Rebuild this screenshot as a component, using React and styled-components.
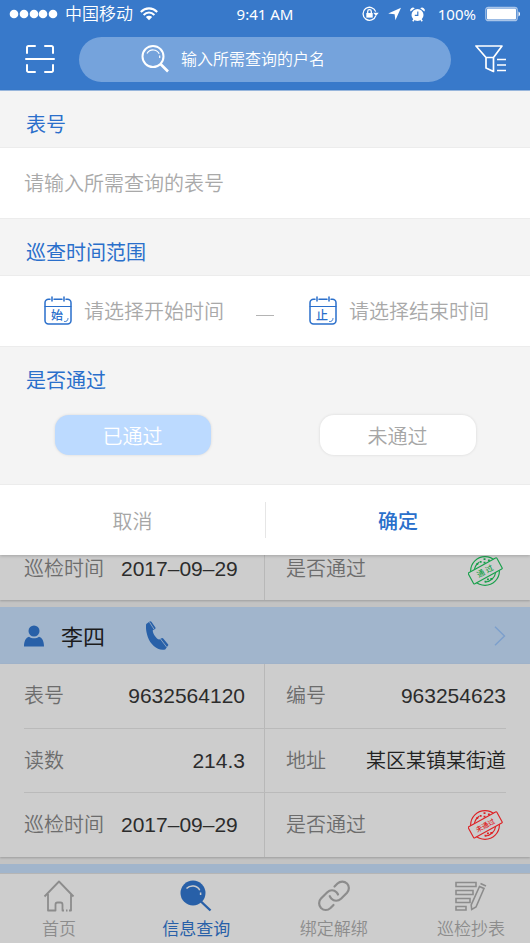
import React, { useState } from "react";
import styled, { createGlobalStyle } from "styled-components";

const records = [
  {
    name: "李四",
    meter: "9632564120",
    code: "963254623",
    reading: "214.3",
    address: "某区某镇某街道",
    date: "2017–09–29",
    passed: false,
  },
];

const tabs = [
  { label: "首页", Icon: HomeIcon },
  { label: "信息查询", Icon: QueryIcon, active: true },
  { label: "绑定解绑", Icon: LinkIcon },
  { label: "巡检抄表", Icon: MeterIcon },
];

function App() {
  const [passed, setPassed] = useState(true);

  return (
    <Page>
      <GlobalStyle />
      <Header>
        <StatusBar>
          <StatusGroup>
            <SignalIcon />
            <Carrier>中国移动</Carrier>
            <WifiIcon />
          </StatusGroup>
          <span>9:41 AM</span>
          <StatusGroup $end>
            <LockIcon />
            <LocationIcon />
            <AlarmIcon />
            <span>100%</span>
            <BatteryIcon />
          </StatusGroup>
        </StatusBar>
        <SearchRow>
          <IconButton aria-label="扫码">
            <ScanIcon />
          </IconButton>
          <SearchBox>
            <SearchIcon />
            <SearchInput aria-label="户名" placeholder="输入所需查询的户名" />
          </SearchBox>
          <IconButton aria-label="筛选">
            <FilterIcon />
          </IconButton>
        </SearchRow>
      </Header>

      <Panel>
        <Heading as="label" htmlFor="meter">
          表号
        </Heading>
        <Field>
          <MeterInput id="meter" placeholder="请输入所需查询的表号" />
        </Field>
        <Heading>巡查时间范围</Heading>
        <Field>
          <DateField>
            <CalendarIcon text="始" />
            <DateInput aria-label="开始时间" placeholder="请选择开始时间" />
          </DateField>
          <Dash />
          <DateField>
            <CalendarIcon text="止" />
            <DateInput aria-label="结束时间" placeholder="请选择结束时间" />
          </DateField>
        </Field>
        <Heading>是否通过</Heading>
        <Chips>
          <Chip $on={passed} aria-pressed={passed} onClick={() => setPassed(true)}>
            已通过
          </Chip>
          <Chip $on={!passed} aria-pressed={!passed} onClick={() => setPassed(false)}>
            未通过
          </Chip>
        </Chips>
        <Actions>
          <Action>取消</Action>
          <Action $primary>确定</Action>
        </Actions>
      </Panel>

      <List>
        <RecordBody>
          <StatusRow date="2017–09–29" passed cut />
        </RecordBody>
        {records.map((record) => (
          <React.Fragment key={record.name}>
            <RecordHead>
              <PersonIcon />
              <Name>{record.name}</Name>
              <PhoneIcon />
              <ChevronIcon />
            </RecordHead>
            <RecordBody>
              <Row>
                <Cell>
                  <dt>表号</dt>
                  <NumberValue>{record.meter}</NumberValue>
                </Cell>
                <Cell>
                  <dt>编号</dt>
                  <NumberValue>{record.code}</NumberValue>
                </Cell>
              </Row>
              <Row>
                <Cell>
                  <dt>读数</dt>
                  <NumberValue>{record.reading}</NumberValue>
                </Cell>
                <Cell>
                  <dt>地址</dt>
                  <Value>{record.address}</Value>
                </Cell>
              </Row>
              <StatusRow date={record.date} passed={record.passed} />
            </RecordBody>
          </React.Fragment>
        ))}
        <NextHead />
      </List>

      <TabBar>
        {tabs.map(({ label, Icon, active }) => (
          <Tab key={label} href="#" $active={active}>
            <Icon />
            {label}
          </Tab>
        ))}
      </TabBar>
    </Page>
  );
}

function StatusRow({ date, passed, cut }) {
  return (
    <Row $cut={cut}>
      <Cell $start>
        <dt>巡检时间</dt>
        <NumberValue>{date}</NumberValue>
      </Cell>
      <Cell>
        <dt>是否通过</dt>
        <dd>
          <StampIcon passed={passed} />
        </dd>
      </Cell>
    </Row>
  );
}

/* icons */

function SignalIcon() {
  return (
    <svg width="49" height="10" fill="#fff">
      {[5, 15, 25, 34, 44].map((x) => (
        <circle key={x} cx={x} cy="5" r="4.3" />
      ))}
    </svg>
  );
}

function WifiIcon() {
  return (
    <svg width="18" height="14" fill="none" stroke="#fff" strokeWidth="2.1">
      <path d="M.8 4.9C5.6.2 12.4.2 17.2 4.9M3.6 7.9c3.2-3 7.6-3 10.8 0" />
      <path d="M9 13.2 5.8 10.1c1.9-1.7 4.5-1.7 6.4 0z" fill="#fff" stroke="none" />
    </svg>
  );
}

function LockIcon() {
  return (
    <svg width="17" height="16" fill="none" stroke="#fff" strokeWidth="1.3">
      <path d="M13.8 9.6A6.5 6.5 0 1 1 13.7 5.6" />
      <path d="M11.3 6.7h5.4L14 10z" fill="#fff" stroke="none" />
      <rect x="4.3" y="7" width="6.4" height="4.6" fill="#fff" stroke="none" />
      <path d="M5.7 7V5.4a1.8 1.8 0 0 1 3.6 0V7" />
    </svg>
  );
}

function LocationIcon() {
  return (
    <svg width="13" height="14" fill="#fff">
      <path d="M13 .8 7.4 13.2 6.6 7.2.2 6.4z" />
    </svg>
  );
}

function AlarmIcon() {
  return (
    <svg width="15" height="15" fill="#fff">
      <path d="M.6 4.6A2.7 2.7 0 0 1 4.8 1.3zM14.4 4.6A2.7 2.7 0 0 0 10.2 1.3z" />
      <circle cx="7.5" cy="8" r="6" />
      <path d="M2.8 14.2 4 12.5M12.2 14.2 11 12.5" stroke="#fff" strokeWidth="1.5" />
      <path d="M7.8 4.5v3.8H4.8" fill="none" stroke="#3879ca" strokeWidth="1.2" />
    </svg>
  );
}

function BatteryIcon() {
  return (
    <svg width="36" height="16">
      <rect x=".8" y="1.3" width="31.4" height="13.4" rx="2.5" fill="none" stroke="#a9c5e9" strokeWidth="1.2" />
      <rect x="2" y="2.5" width="29" height="11" rx="1" fill="#fff" />
      <path d="M33.5 5.5c2 .8 2 4.2 0 5z" fill="#fff" />
    </svg>
  );
}

function ScanIcon() {
  return (
    <svg width="30" height="30" fill="none" stroke="#fff" strokeWidth="2" strokeLinecap="round">
      <path d="M2 9V3.5A1.5 1.5 0 0 1 3.5 2H10M20 2h6.5A1.5 1.5 0 0 1 28 3.5V9M28 21v5.5a1.5 1.5 0 0 1-1.5 1.5H20M10 28H3.5A1.5 1.5 0 0 1 2 26.5V21M1 15h28" />
    </svg>
  );
}

function SearchIcon() {
  return (
    <svg width="28" height="30" fill="none" stroke="#fff">
      <circle cx="12" cy="12.5" r="10.5" strokeWidth="2" />
      <path d="M6 9.5c3-5 10-4.500 12.200.3" strokeWidth="1.2" />
      <path d="M18.700 11.500v2.500" strokeWidth="1.2" />
      <path d="m19.500 20 7.500 7.500" strokeWidth="2.6" />
    </svg>
  );
}

function FilterIcon() {
  return (
    <svg width="31" height="30" fill="none" stroke="#fff" strokeWidth="1.7" strokeLinejoin="round">
      <path d="M1 2h26l-8.500 11.500v14l-7.500-3.500V13.500zM11 13.500h7.500" />
      <path d="M22 15.500h9M22 21h9M22 26.500h9" />
    </svg>
  );
}

function CalendarIcon({ text }) {
  return (
    <svg width="28" height="30" fill="none" stroke="#2a6fcb" strokeWidth="1.5" strokeLinecap="round">
      <path d="M6 3.3H4.5A3.5 3.5 0 0 0 1 6.800v17.7A3.5 3.5 0 0 0 4.5 28h19a3.500 3.500 0 0 0 3.500-3.500V6.800a3.500 3.500 0 0 0-3.500-3.500H22M10 3.300h8M8 1v4M20 1v4" />
      <path d="M1 10.500h26" strokeWidth="1" />
      <path d="M20.500 25.500c2.200.3 3.300-.8 3.500-3" strokeWidth=".9" />
      <text x="13" y="23.500" textAnchor="middle" fontSize="12" fontWeight="500" fill="#2a6fcb" stroke="none">
        {text}
      </text>
    </svg>
  );
}

function PersonIcon() {
  return (
    <svg width="20" height="22" fill="#2860a8">
      <circle cx="10" cy="6" r="5.5" />
      <path d="M0 21.500c0-5.500 2-9 5-9.700 3 2 7 2 10 0 3 .7 5 4.200 5 9.700z" />
    </svg>
  );
}

function PhoneIcon() {
  return (
    <svg width="23" height="31" fill="#2860a8">
      <path d="m.2 4 3.500-2.500q1-.8 1.700.2l4 5.800q.5.900-.4 1.500L6.800 10.300c-.3 3 3.500 8.500 6.500 9.300l2.200-1.300q1-.5 1.700.3l4.800 5.600q.6.8-.1 1.600l-2.700 3.600C12.500 31.500 4.500 25 1.800 17-.1 11.500-.3 7 .2 4z" />
      <path d="m3.500 2.200 4.500 7M14.500 19l6.300 8.300" stroke="#a1b5cc" strokeWidth=".8" />
    </svg>
  );
}

function ChevronIcon() {
  return (
    <Chevron width="12" height="20" fill="none" stroke="#7c9fcc" strokeWidth="1.4">
      <path d="m1 .8 9.500 9.200L1 19.200" />
    </Chevron>
  );
}

function StampIcon({ passed }) {
  const color = passed ? "#18a04b" : "#dd2326";
  return (
    <Stamp width="35" height="32" viewBox="0 0 36 32" fill="none" stroke={color} strokeWidth="1.2">
      <circle cx="17.5" cy="16" r="14.8" />
      <path d="M6.500 15a11.500 11.500 0 0 1 5-8M28.500 17a11.500 11.500 0 0 1-11 10.300" />
      <path d="M8.500 9h2M12 6.500h2M16 7.500h2M16 3.800h2M20.500 5h2M17 27h2M23 24h2M19.500 24.500h2" strokeWidth="1.8" />
      <g transform="rotate(-29 17.5 16)">
        <rect x="1" y="9.500" width="33.5" height="13" rx="1" fill="#cdcdcd" />
        <text x="17.500" y="19" textAnchor="middle" fontSize={passed ? 8 : 7} fontWeight="500" fill={color} stroke="none">
          {passed ? "通 过" : "未通过"}
        </text>
      </g>
    </Stamp>
  );
}

function HomeIcon() {
  return (
    <svg width="32" height="32" fill="none" stroke="currentColor" strokeWidth="1.8" strokeLinejoin="round">
      <path d="m1.500 16.500 14.500-15 14.500 15M5 14v16.500h7.500v-6a2 2 0 0 1 2-2h3a2 2 0 0 1 2 2v6h1.500M23 30.500h1.500M26 30.500h2V14" />
    </svg>
  );
}

function QueryIcon() {
  return (
    <svg width="32" height="32" fill="none" stroke="currentColor">
      <circle cx="13" cy="13" r="12.5" fill="currentColor" stroke="none" />
      <path d="m21 21.500 9.500 9" strokeWidth="2.4" />
      <path d="M6.500 8.500c4-4 11-3 13.200 1.700M20.600 12.500v2.500" stroke="#cdcdcd" strokeWidth="1.5" />
    </svg>
  );
}

function LinkIcon() {
  return (
    <svg width="32" height="32" fill="none" stroke="currentColor" strokeWidth="2.2" strokeLinecap="round">
      <path d="M16.500 6.500l3-3a7 7 0 0 1 9.500 0c2.500 2.500 2.500 6.500 0 9.200l-6 6c-2.800 2.700-7 2.700-9.500 0-.8-.8-1.300-1.700-1.700-2.500" />
      <path d="M20 14.500c-.3-.8-.8-1.600-1.500-2.300-2.500-2.600-6.500-2.600-9.200 0L3 18.500c-2.500 2.500-2.500 6.700 0 9.500 2.800 2.600 6.700 2.600 9.500 0l3-3" />
    </svg>
  );
}

function MeterIcon() {
  return (
    <svg width="32" height="32" fill="none" stroke="currentColor" strokeWidth="1.6">
      <path d="M1 2.500h20v4H1zM1 10.500h17v4H1zM1 18.500h14v4H1zM1 26.500h10v3.500H1z" />
      <path d="m24.500 6.500 4.500 2-8 18.500-4.300 2.500-.5-4.500zM25.500 3.500l5.500 2.500" />
    </svg>
  );
}

const GlobalStyle = createGlobalStyle`
  *, *::before, *::after {
    box-sizing: border-box;
  }

  body {
    margin: 0;
    background: #cdcdcd;
    font-family: "Noto Sans", "Noto Sans CJK SC", sans-serif;
    font-weight: 350;
  }

  button, input {
    border: 0;
    padding: 0;
    background: none;
    font: inherit;
    color: inherit;
    outline: none;
  }

  svg {
    display: block;
    flex: none;
    font-family: "Noto Sans CJK SC", sans-serif;
  }

  dl, dd {
    margin: 0;
  }
`;

const Page = styled.div`
  display: flex;
  flex-direction: column;
  height: 100vh;
`;

const Header = styled.header`
  flex: none;
  background: #3879ca;
  border-bottom: 1px solid #9dbce4;
  color: #fff;
`;

const StatusBar = styled.div`
  display: grid;
  grid-template-columns: 1fr auto 1fr;
  align-items: center;
  height: 28px;
  padding: 0 9px;
  font-family: "Noto Sans", "Noto Sans CJK SC", sans-serif;
  font-size: 15px;
  font-weight: 400;
  line-height: 20px;
`;

const StatusGroup = styled.div`
  display: flex;
  align-items: center;
  gap: ${(p) => (p.$end ? 9 : 7)}px;
  justify-content: ${(p) => (p.$end ? "flex-end" : "flex-start")};

  span {
    margin-left: ${(p) => (p.$end ? 4 : 0)}px;
  }
`;

const Carrier = styled.span`
  font-size: 17px;
  font-weight: 350;
`;

const SearchRow = styled.div`
  display: flex;
  align-items: center;
  gap: 24px;
  height: 62px;
  padding: 0 24px 0 25px;
`;

const IconButton = styled.button`
  flex: none;
  cursor: pointer;
`;

const SearchBox = styled.div`
  display: flex;
  flex: 1;
  align-items: center;
  gap: 12px;
  min-width: 0;
  height: 45px;
  padding: 0 16px 0 62px;
  border-radius: 23px;
  background: #75a3dc;
`;

const SearchInput = styled.input`
  flex: 1;
  min-width: 0;
  font-size: 16px;

  &::placeholder {
    color: #fff;
    opacity: 1;
  }
`;

const Panel = styled.section`
  flex: none;
  background: #f4f4f4;
  box-shadow: 0 1px 3px rgba(0, 0, 0, 0.2);
  font-size: 20px;
  z-index: 1;
`;

const Heading = styled.h2`
  display: block;
  margin: 0;
  padding: 21px 26px 9px;
  color: #2a6fcb;
  font-size: 20px;
  font-weight: 400;
  line-height: 26px;
`;

const Field = styled.div`
  display: flex;
  align-items: center;
  height: 72px;
  border: solid #ececec;
  border-width: 1px 0;
  background: #fff;

  input::placeholder {
    color: #a9a9a9;
    opacity: 1;
  }
`;

const MeterInput = styled.input`
  flex: 1;
  min-width: 0;
  padding: 0 24px;
`;

const DateField = styled.div`
  display: flex;
  flex: 1;
  align-items: center;
  gap: 12px;
  min-width: 0;
  padding-left: 44px;
`;

const DateInput = styled.input`
  flex: 1;
  min-width: 0;
`;

const Dash = styled.span`
  flex: none;
  width: 18px;
  height: 1px;
  margin: 8px -9px 0;
  background: #b4b4b4;
`;

const Chips = styled.div`
  display: grid;
  grid-template-columns: 1fr 1fr;
  justify-items: center;
  padding: 12px 0 29px;
`;

const Chip = styled.button`
  width: 156px;
  height: 40px;
  padding-top: 3px;
  border-radius: 14px;
  background: ${(p) => (p.$on ? "#bcdaff" : "#fff")};
  box-shadow: 0 0 3px rgba(0, 0, 0, 0.12);
  color: ${(p) => (p.$on ? "#fff" : "#a6a6a6")};
  line-height: 26px;
  cursor: pointer;
`;

const Actions = styled.div`
  display: grid;
  grid-template-columns: 1fr 1fr;
  padding: 17px 0;
  border-top: 1px solid #ececec;
  background: #fff;
`;

const Action = styled.button`
  height: 36px;
  color: ${(p) => (p.$primary ? "#2a6fcb" : "#a6a6a6")};
  font-weight: ${(p) => (p.$primary ? 500 : 350)};
  cursor: pointer;

  & + & {
    border-left: 1px solid #e6e6e6;
  }
`;

const List = styled.main`
  display: flex;
  flex: 1;
  flex-direction: column;
  min-height: 0;
  overflow-y: auto;
  scrollbar-width: none;
  background: #c3c3c3;
  font-size: 20px;
  line-height: 28px;
`;

const RecordHead = styled.div`
  display: flex;
  flex: none;
  align-items: center;
  height: 57px;
  padding: 0 24px;
  background: #a1b5cc;
`;

const NextHead = styled.div`
  flex: 1;
  background: #a1b5cc;
`;

const Name = styled.strong`
  margin: 0 41px 0 17px;
  color: #1c1c1c;
  font-size: 22px;
  font-weight: 400;
`;

const Chevron = styled.svg`
  margin-left: auto;
`;

const RecordBody = styled.dl`
  flex: none;
  margin-bottom: 7px;
  padding: 0 24px;
  background: #cdcdcd;
  box-shadow: 0 1px 2px rgba(0, 0, 0, 0.2);
`;

const Row = styled.div`
  display: grid;
  grid-template-columns: 1fr 1fr;
  height: ${(p) => (p.$cut ? 45 : 64)}px;
  align-items: ${(p) => (p.$cut ? "start" : "center")};

  & + & {
    border-top: 1px solid #bababa;
  }

  & + &:last-child {
    height: 65px;
  }
`;

const Cell = styled.div`
  display: flex;
  align-items: inherit;
  justify-content: ${(p) => (p.$start ? "flex-start" : "space-between")};
  gap: 17px;
  height: 100%;
  color: #6c6c6c;
  white-space: nowrap;

  &:first-child {
    padding-right: 19px;
    border-right: 1px solid #b8b8b8;
  }

  &:last-child {
    padding-left: 21px;
  }
`;

const Value = styled.dd`
  color: #222;
`;

const NumberValue = styled(Value)`
  color: #2c2c2c;
  font-family: "Liberation Sans", sans-serif;
  font-size: 21px;
`;

const Stamp = styled.svg`
  margin-right: 3px;
`;

const TabBar = styled.nav`
  display: flex;
  flex: none;
  justify-content: space-between;
  height: 70px;
  padding: 6px 24px 0;
  border-top: 1px solid #b5b5b5;
  background: #cdcdcd;
`;

const Tab = styled.a`
  display: flex;
  flex-direction: column;
  align-items: center;
  gap: 5px;
  width: 70px;
  color: ${(p) => (p.$active ? "#2860a8" : "#8c8c8c")};
  font-size: 17px;
  font-weight: ${(p) => (p.$active ? 400 : 350)};
  line-height: 24px;
  text-decoration: none;
  white-space: nowrap;
`;

export default App;
